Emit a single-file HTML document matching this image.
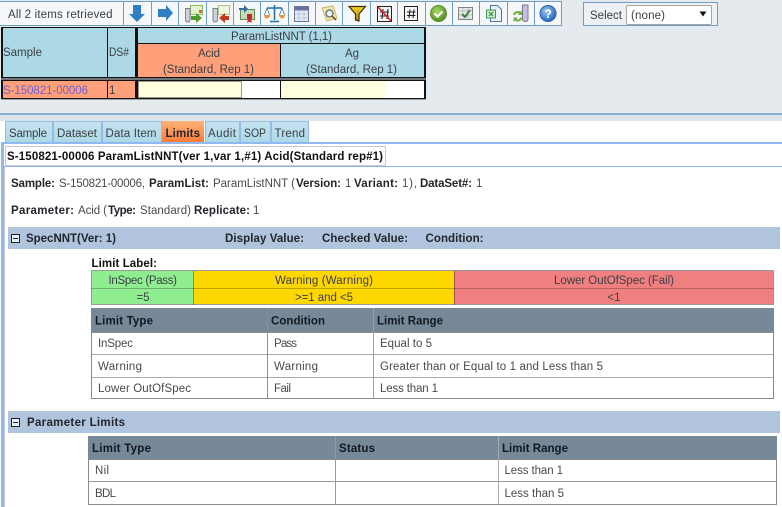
<!DOCTYPE html>
<html lang="en">
<head>
<meta charset="utf-8">
<title>Limits</title>
<style>
html,body{margin:0;padding:0;background:#fff;width:782px;height:507px;overflow:hidden}
svg{display:block;filter:blur(.3px)}
text{font-family:"Liberation Sans",sans-serif;font-size:11.5px;fill:#4a4a4a;white-space:pre}
.b{font-weight:bold;fill:#22252b}
.d{fill:#3a3f45}
</style>
</head>
<body>
<svg width="782" height="507" viewBox="0 0 782 507" xmlns="http://www.w3.org/2000/svg">
<defs>
<linearGradient id="lim" x1="0" y1="0" x2="0" y2="1"><stop offset="0" stop-color="#ffb27a"/><stop offset="1" stop-color="#ff7a38"/></linearGradient>
<linearGradient id="tab" x1="0" y1="0" x2="0" y2="1"><stop offset="0" stop-color="#c6e2ef"/><stop offset="1" stop-color="#add8e6"/></linearGradient>
<linearGradient id="fun" x1="0" y1="0" x2="0" y2="1"><stop offset="0" stop-color="#f6d21c"/><stop offset="1" stop-color="#b08a08"/></linearGradient>
<radialGradient id="grn" cx=".4" cy=".35" r=".7"><stop offset="0" stop-color="#a6d860"/><stop offset="1" stop-color="#4c8a1e"/></radialGradient>
<radialGradient id="blu" cx=".4" cy=".35" r=".7"><stop offset="0" stop-color="#9cc8f4"/><stop offset="1" stop-color="#1c62b8"/></radialGradient>
</defs>

<!-- page top -->
<rect x="0" y="0" width="782" height="113" fill="#e5eaee"/>
<rect x="0" y="113" width="782" height="2" fill="#8aaed0"/>
<rect x="0" y="115" width="782" height="6" fill="#dce5ee"/>

<!-- toolbar -->
<rect x="0" y="1" width="562" height="25" fill="#f5f7f8"/>
<rect x="0" y="1" width="562" height="1" fill="#6f9dc9"/>
<rect x="0" y="25" width="562" height="1" fill="#6f9dc9"/>
<g fill="#6f9dc9">
<rect x="123" y="1" width="1" height="25"/><rect x="151" y="1" width="1" height="25"/><rect x="178" y="1" width="1" height="25"/><rect x="206" y="1" width="1" height="25"/><rect x="233" y="1" width="1" height="25"/><rect x="260" y="1" width="1" height="25"/><rect x="288" y="1" width="1" height="25"/><rect x="315" y="1" width="1" height="25"/><rect x="342" y="1" width="1" height="25"/><rect x="370" y="1" width="1" height="25"/><rect x="397" y="1" width="1" height="25"/><rect x="425" y="1" width="1" height="25"/><rect x="452" y="1" width="1" height="25"/><rect x="479" y="1" width="1" height="25"/><rect x="507" y="1" width="1" height="25"/><rect x="534" y="1" width="1" height="25"/><rect x="561" y="1" width="1" height="25"/>
</g>
<text x="8" y="18" textLength="104.500" class="d">All 2 items retrieved</text>

<!-- toolbar icons -->
<path d="M133 5h8v9h4l-8 8-8-8h4z" fill="#2f7fc4"/>
<path d="M158 9h8V5l7 8-7 8v-4h-8z" fill="#2f7fc4"/>
<!-- tube + arrow green -->
<g>
<rect x="190.500" y="5.500" width="12" height="9" fill="#e4f2d2" stroke="#8abb5c"/>
<path d="M185.500 8.500h4.500v11q0 2.500-2.250 2.500T185.500 19.500z" fill="#cfd0dc" stroke="#7c7e8a"/>
<path d="M191 16h5v-3l6 5-6 5v-3h-5z" fill="#4f9a2c"/>
<rect x="199" y="10" width="3" height="3" fill="#e8662c"/>
</g>
<!-- tube + arrow red -->
<g>
<rect x="218.500" y="5.500" width="11" height="9" fill="#eef6e2" stroke="#a8cc8c"/>
<path d="M213 8.500h4.500v11q0 2.500-2.250 2.500T213 19.500z" fill="#cfd0dc" stroke="#7c7e8a"/>
<path d="M229 16h-4v-3l-6 5 6 5v-3h4z" fill="#c8381c"/>
</g>
<!-- certificate -->
<g>
<rect x="240.500" y="9.500" width="14" height="10" fill="#c8d8b8" stroke="#5f8f50"/>
<path d="M239 8h5V5l4 4-4 4v-3h-5z" fill="#2f6f9f"/>
<rect x="247" y="14" width="5" height="5" fill="#c8242c"/>
<path d="M248 19l-1 4 2.500-1.500L252 23l-1-4z" fill="#c8242c"/>
</g>
<!-- scales -->
<g fill="none" stroke="#1f6fa8" stroke-width="1.500">
<path d="M274.500 5v15M270 21.500h9M267 8h15"/>
<path d="M267 8l-2.500 7M267 8l2.500 7M282 8l-2.500 7M282 8l2.500 7" stroke-width=".7"/>
</g>
<path d="M264 15h6q-.5 3.500-3 3.500T264 15zM279 15h6q-.5 3.500-3 3.500T279 15z" fill="#ee9340"/>
<!-- grid -->
<g>
<rect x="294.500" y="6.500" width="14" height="15" fill="#e8ecf4" stroke="#6a74a0"/>
<rect x="295" y="7" width="13" height="3.500" fill="#6a74a0"/>
<path d="M295 14h13M295 18h13M299 11v10M304 11v10" stroke="#b4bad0" stroke-width=".8"/>
</g>
<!-- note & magnifier -->
<g>
<path d="M322 8l11-2 4 12-10 3z" fill="#f5e7a8" stroke="#c8b474"/>
<circle cx="329.500" cy="13.500" r="3.500" fill="#eef4f8" stroke="#5a6a78" stroke-width="1.300"/>
<path d="M332 16l4 4" stroke="#5a4a2a" stroke-width="1.500"/>
</g>
<!-- funnel -->
<path d="M349 6.500h16.500l-6.500 7.500v7l-3.500-1v-6z" fill="url(#fun)" stroke="#3c3208" stroke-width="1.200"/>
<!-- no-hash -->
<g>
<rect x="377.500" y="6.500" width="14" height="15" fill="#f4f4f4" stroke="#222"/>
<path d="M383 9l-1 10M388 9l-1 10M380 12h9M380 16h9" stroke="#222" stroke-width="1.100"/>
<path d="M378 7l13 14" stroke="#e0202c" stroke-width="1.600"/>
</g>
<!-- hash -->
<g>
<rect x="404.500" y="6.500" width="13" height="14" fill="#f4f4f4" stroke="#222"/>
<path d="M410 9.500l-1 8.500M414 9.500l-1 8.500M407 12h8.500M407 15.500h8.500" stroke="#222" stroke-width="1.100"/>
</g>
<!-- green check -->
<circle cx="438.500" cy="13.500" r="8" fill="url(#grn)" stroke="#5a8a30"/>
<path d="M434.500 13.500l3 3 5-5" fill="none" stroke="#fff" stroke-width="2.200"/>
<!-- check grid -->
<g>
<rect x="458.500" y="7.500" width="14" height="12" fill="#e4e6e8" stroke="#80848a"/>
<path d="M459 11h13M459 15h13M463 8v11M468 8v11" stroke="#b4b8bc" stroke-width=".7"/>
<path d="M462 14l3 3 5-7" fill="none" stroke="#2e7a2c" stroke-width="1.800"/>
</g>
<!-- excel doc -->
<g>
<path d="M490.500 5.500h7l4 4v12h-11z" fill="#eef3fc" stroke="#4a74b8"/>
<rect x="486.500" y="10" width="9" height="8" fill="#cfe8cf" stroke="#3e9a4e"/>
<path d="M489 12l4 4M493 12l-4 4" stroke="#2c8a3c" stroke-width="1.100"/>
</g>
<!-- refresh tube -->
<g>
<path d="M522.500 5h5.500v14q0 2.500-2.750 2.500T522.500 19z" fill="#c4bee4" stroke="#7c7c84"/>
<path d="M514 15a4 4 0 0 1 6.500-2M521.500 17.500a4 4 0 0 1-6.500 2" fill="none" stroke="#6cae3c" stroke-width="2"/>
<path d="M522 10.500v4.500h-4.500zM513.500 22v-4.500h4.500z" fill="#6cae3c"/>
</g>
<!-- help -->
<circle cx="548" cy="13.500" r="8" fill="url(#blu)" stroke="#2a62a8"/>
<text x="544.500" y="18" textLength="7" style="font-size:12px;font-weight:bold;fill:#fff">?</text>

<!-- Select -->
<rect x="583.500" y="2.500" width="134" height="23" fill="#eef1f4" stroke="#6f9dc9"/>
<text x="590" y="19" textLength="32" class="d">Select</text>
<rect x="626.500" y="5.500" width="85" height="19" rx="1.500" fill="#fff" stroke="#a4a4a4"/>
<text x="631" y="19" textLength="34" class="d">(none)</text>
<path d="M699.500 11.500h7l-3.500 5z" fill="#111"/>

<!-- header grid -->
<rect x="1" y="27" width="425" height="52" fill="#111"/>
<rect x="3" y="28" width="104" height="49" fill="#add8e6"/>
<rect x="108" y="28" width="27" height="49" fill="#add8e6"/>
<rect x="138" y="28" width="286" height="15" fill="#add8e6"/>
<rect x="138" y="44" width="142" height="33" fill="#ffa07a"/>
<rect x="281" y="44" width="143" height="33" fill="#add8e6"/>
<rect x="1" y="78" width="425" height="2" fill="#70757a"/>
<text x="3" y="56" textLength="39" class="d">Sample</text>
<text x="109" y="56" textLength="20" lengthAdjust="spacingAndGlyphs" class="d">DS#</text>
<text x="231" y="40" textLength="101" class="d">ParamListNNT (1,1)</text>
<text x="198" y="57" textLength="22" class="d">Acid</text>
<text x="163" y="73" textLength="91" class="d">(Standard, Rep 1)</text>
<text x="345" y="57" textLength="14" lengthAdjust="spacingAndGlyphs" class="d">Ag</text>
<text x="306" y="73" textLength="91" class="d">(Standard, Rep 1)</text>

<!-- data row -->
<rect x="1" y="80" width="425" height="19" fill="#111"/>
<rect x="3" y="81" width="104" height="17" fill="#ffa07a"/>
<rect x="108" y="81" width="27" height="17" fill="#ffa07a"/>
<rect x="138" y="81" width="142" height="17" fill="#fff"/>
<rect x="138.500" y="81.500" width="103" height="16" fill="#ffffe0" stroke="#9a9a88"/>
<rect x="281" y="81" width="143" height="17" fill="#fff"/>
<rect x="281" y="81" width="105" height="17" fill="#ffffe0"/>
<rect x="1" y="99" width="425" height="1" fill="#9aa0a6"/>
<text x="3" y="94" textLength="85" style="fill:#6f5fd4">S-150821-00006</text>
<text x="109" y="94" textLength="5" class="d">1</text>

<!-- tabs -->
<rect x="5.500" y="121.500" width="47" height="21" fill="url(#tab)" stroke="#92bde2"/>
<rect x="53.500" y="121.500" width="48" height="21" fill="url(#tab)" stroke="#92bde2"/>
<rect x="102.500" y="121.500" width="59" height="21" fill="url(#tab)" stroke="#92bde2"/>
<rect x="162" y="121" width="42" height="22" fill="url(#lim)"/>
<rect x="205.500" y="121.500" width="34" height="21" fill="url(#tab)" stroke="#92bde2"/>
<rect x="240.500" y="121.500" width="30" height="21" fill="url(#tab)" stroke="#92bde2"/>
<rect x="271.500" y="121.500" width="37" height="21" fill="url(#tab)" stroke="#92bde2"/>
<text x="9" y="137" textLength="38" class="d">Sample</text>
<text x="57" y="137" textLength="40" class="d">Dataset</text>
<text x="105.500" y="137" textLength="51" class="d">Data Item</text>
<text x="165.500" y="137" textLength="34.500" class="b">Limits</text>
<text x="208" y="137" textLength="28" class="d">Audit</text>
<text x="244" y="137" textLength="22" lengthAdjust="spacingAndGlyphs" class="d">SOP</text>
<text x="274.500" y="137" textLength="30.500" class="d">Trend</text>

<!-- tab strip & content frame -->
<rect x="1" y="142" width="781" height="2" fill="#8fb8f4"/>
<rect x="1" y="144" width="3" height="363" fill="#8fb8f4"/>
<rect x="5.500" y="146.500" width="380" height="19" fill="#fff" stroke="#c8c8c8"/>
<text x="7" y="160" textLength="376" class="b" style="fill:#111">S-150821-00006 ParamListNNT(ver 1,var 1,#1) Acid(Standard rep#1)</text>
<rect x="4" y="166" width="778" height="1" fill="#8fb8f4"/>
<rect x="4" y="167" width="1" height="340" fill="#c8c8c8"/>

<!-- sample info -->
<text x="11" y="187" textLength="44" class="b">Sample:</text>
<text x="59" y="187" textLength="86">S-150821-00006,</text>
<text x="149" y="187" textLength="60" class="b">ParamList:</text>
<text x="213" y="187" textLength="82">ParamListNNT (</text>
<text x="296" y="187" textLength="45" class="b">Version:</text>
<text x="345" y="187" textLength="5">1</text>
<text x="354" y="187" textLength="44" class="b">Variant:</text>
<text x="402" y="187" textLength="15">1),</text>
<text x="420" y="187" textLength="52" class="b">DataSet#:</text>
<text x="476" y="187" textLength="5">1</text>

<text x="11" y="214" textLength="63" class="b">Parameter:</text>
<text x="78" y="214" textLength="29">Acid (</text>
<text x="108" y="214" textLength="28" class="b">Type:</text>
<text x="140" y="214" textLength="51">Standard)</text>
<text x="194" y="214" textLength="56" class="b">Replicate:</text>
<text x="253" y="214" textLength="5">1</text>

<!-- SpecNNT section -->
<rect x="8" y="227" width="772" height="22" fill="#b0c4de"/>
<rect x="11.500" y="234.500" width="8" height="8" fill="#e8eef6" stroke="#222"/>
<rect x="13" y="238" width="5" height="1" fill="#222"/>
<text x="26" y="242" textLength="90" class="b">SpecNNT(Ver: 1)</text>
<text x="225" y="242" textLength="79" class="b">Display Value:</text>
<text x="322" y="242" textLength="86" class="b">Checked Value:</text>
<text x="425.500" y="242" textLength="58" class="b">Condition:</text>

<text x="91.500" y="267" textLength="65.500" class="b" style="fill:#111">Limit Label:</text>
<rect x="91" y="271" width="102" height="34" fill="#90ee90"/>
<rect x="193" y="271" width="261" height="34" fill="#ffd700"/>
<rect x="454" y="271" width="320" height="34" fill="#f08080"/>
<rect x="91.500" y="270.500" width="682" height="34" fill="none" stroke="#9a9a9a"/>
<rect x="91" y="288" width="683" height="1" fill="#000" opacity=".25"/>
<rect x="193" y="271" width="1" height="34" fill="#000" opacity=".35"/>
<rect x="454" y="271" width="1" height="34" fill="#000" opacity=".35"/>
<text x="108.500" y="284" textLength="68.500" class="d">InSpec (Pass)</text>
<text x="136.500" y="301" textLength="13" class="d">=5</text>
<text x="275" y="284" textLength="98" class="d">Warning (Warning)</text>
<text x="295" y="301" textLength="58" class="d">&gt;=1 and &lt;5</text>
<text x="554" y="284" textLength="120" class="d">Lower OutOfSpec (Fail)</text>
<text x="607.500" y="301" textLength="13" class="d">&lt;1</text>

<!-- limit table -->
<rect x="91" y="308" width="683" height="24" fill="#778899"/>
<rect x="91.500" y="332.500" width="682" height="66" fill="#fff" stroke="#8a8a8a"/>
<rect x="92" y="354" width="681" height="1" fill="#aaa"/>
<rect x="92" y="377" width="681" height="1" fill="#aaa"/>
<rect x="267" y="308" width="1" height="90" fill="#8a8f94"/>
<rect x="373" y="308" width="1" height="90" fill="#9a9fa4"/>
<text x="95" y="324.500" textLength="58" class="b" style="fill:#111820">Limit Type</text>
<text x="271" y="324.500" textLength="54" class="b" style="fill:#111820">Condition</text>
<text x="377" y="324.500" textLength="66" class="b" style="fill:#111820">Limit Range</text>
<text x="98" y="347" textLength="35">InSpec</text>
<text x="274" y="347" textLength="23">Pass</text>
<text x="380" y="347" textLength="52">Equal to 5</text>
<text x="98" y="370" textLength="44">Warning</text>
<text x="274" y="370" textLength="44">Warning</text>
<text x="380" y="370" textLength="223">Greater than or Equal to 1 and Less than 5</text>
<text x="98" y="392" textLength="93">Lower OutOfSpec</text>
<text x="274" y="392" textLength="17">Fail</text>
<text x="380" y="392" textLength="58">Less than 1</text>

<!-- Parameter Limits section -->
<rect x="8" y="411" width="772" height="22" fill="#b0c4de"/>
<rect x="11.500" y="418.500" width="8" height="8" fill="#e8eef6" stroke="#222"/>
<rect x="13" y="422" width="5" height="1" fill="#222"/>
<text x="27" y="426" textLength="98" class="b">Parameter Limits</text>

<rect x="88" y="436" width="689" height="23" fill="#778899"/>
<rect x="88.500" y="459.500" width="688" height="45" fill="#fff" stroke="#8a8a8a"/>
<rect x="89" y="481" width="687" height="1" fill="#999"/>
<rect x="335" y="436" width="1" height="68" fill="#999"/>
<rect x="498" y="436" width="1" height="68" fill="#aaa"/>
<text x="92" y="452" textLength="59" class="b" style="fill:#111820">Limit Type</text>
<text x="339" y="452" textLength="36" class="b" style="fill:#111820">Status</text>
<text x="502" y="452" textLength="66" class="b" style="fill:#111820">Limit Range</text>
<text x="95" y="474" textLength="14">Nil</text>
<text x="504.500" y="474" textLength="58.500">Less than 1</text>
<text x="95" y="497" textLength="21">BDL</text>
<text x="504.500" y="497" textLength="59.500">Less than 5</text>
</svg>
</body>
</html>
